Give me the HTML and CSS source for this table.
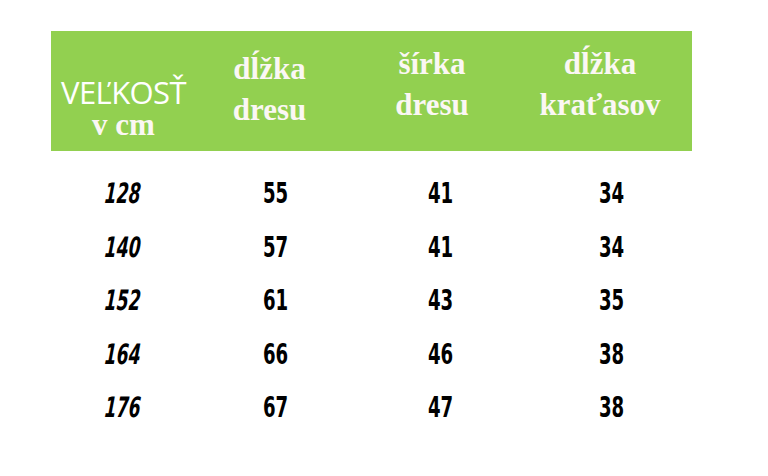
FILE: index.html
```html
<!DOCTYPE html>
<html lang="sk">
<head>
<meta charset="utf-8">
<title>Veľkostná tabuľka</title>
<link rel="stylesheet" href="styles.css">
</head>
<body>
<div class="table">
  <div class="head">
    <div class="hcell c1">
      <span class="sans">VEĽKOSŤ</span>
      <span class="serif tight">v cm</span>
    </div>
    <div class="hcell c2">
      <span class="serif">dĺžka</span>
      <span class="serif">dresu</span>
    </div>
    <div class="hcell c3">
      <span class="serif">šírka</span>
      <span class="serif">dresu</span>
    </div>
    <div class="hcell c4">
      <span class="serif">dĺžka</span>
      <span class="serif">kraťasov</span>
    </div>
  </div>
  <div class="body">
    <div class="size"><span class="g">128</span></div><div class="num"><span class="g">55</span></div><div class="num"><span class="g">41</span></div><div class="num"><span class="g">34</span></div>
    <div class="size"><span class="g">140</span></div><div class="num"><span class="g">57</span></div><div class="num"><span class="g">41</span></div><div class="num"><span class="g">34</span></div>
    <div class="size"><span class="g">152</span></div><div class="num"><span class="g">61</span></div><div class="num"><span class="g">43</span></div><div class="num"><span class="g">35</span></div>
    <div class="size"><span class="g">164</span></div><div class="num"><span class="g">66</span></div><div class="num"><span class="g">46</span></div><div class="num"><span class="g">38</span></div>
    <div class="size"><span class="g">176</span></div><div class="num"><span class="g">67</span></div><div class="num"><span class="g">47</span></div><div class="num"><span class="g">38</span></div>
  </div>
</div>
</body>
</html>
```
FILE: styles.css
```css
html, body {
  margin: 0;
  padding: 0;
  background: #ffffff;
}
body {
  width: 768px;
  height: 476px;
  overflow: hidden;
}
.table {
  padding-top: 31px;
  padding-left: 51px;
}
.head {
  width: 641px;
  height: 120px;
  background: #92d050;
  display: grid;
  grid-template-columns: 145px 147px 178px 158px 1fr;
  color: #fbf7f4;
}
.hcell {
  display: flex;
  flex-direction: column;
  align-items: center;
}
.c1 { padding-top: 44px; }
.c2 { padding-top: 17px; }
.c3 { padding-top: 12px; }
.c4 { padding-top: 12px; }
.sans {
  font-family: "Open Sans", "Liberation Sans", sans-serif;
  font-size: 31px;
  line-height: 34px;
  letter-spacing: -0.6px;
  color: #ffffff;
}
.serif {
  font-family: "Liberation Serif", "DejaVu Serif", serif;
  font-weight: bold;
  font-size: 31px;
  line-height: 41px;
}
.serif.tight {
  line-height: 32px;
}
.body {
  display: grid;
  grid-template-columns: 90px 162px 168px 174px;
  padding-top: 16px;
  padding-left: 54px;
  font-family: "Liberation Sans Narrow", "DejaVu Sans Condensed", "Liberation Sans", sans-serif;
  font-stretch: condensed;
  font-weight: bold;
  font-size: 28px;
  line-height: 53.5px;
  color: #000000;
}
.g {
  display: inline-block;
  transform: scaleX(0.72);
}
.size {
  font-style: italic;
  text-align: left;
}
.size .g {
  transform-origin: left center;
  transform: scaleX(0.68) skewX(-6deg);
}
.num {
  text-align: center;
}
```
